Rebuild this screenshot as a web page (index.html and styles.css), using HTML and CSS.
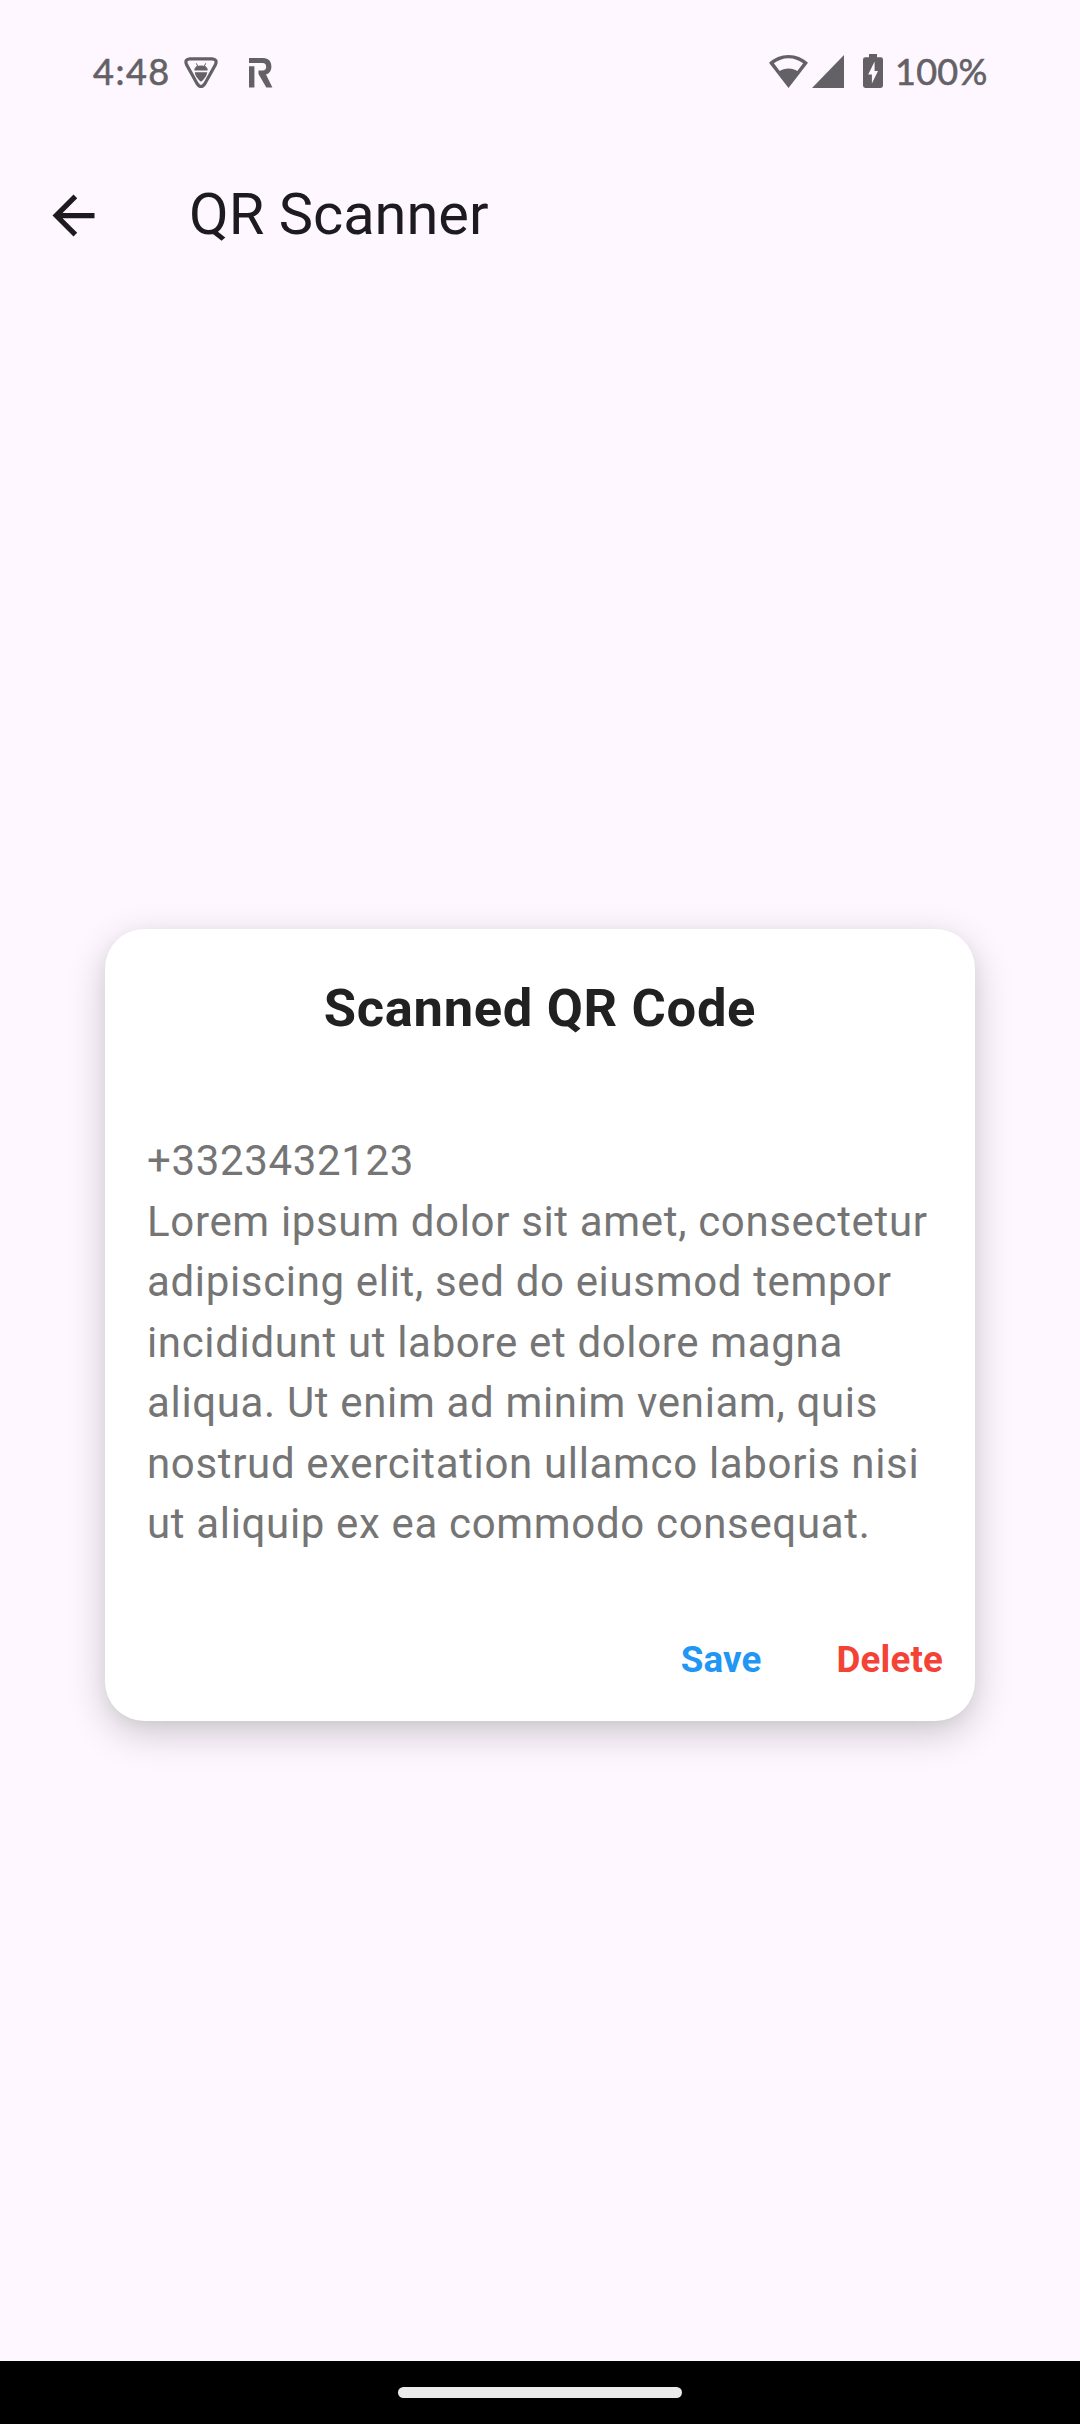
FILE: index.html
```html
<!DOCTYPE html>
<html lang="en">
<head>
<meta charset="utf-8">
<title>QR Scanner</title>
<link rel="stylesheet" href="styles.css">
</head>
<body>
<div class="screen">
  <header class="status-bar">
    <span class="clock">4:48</span>
    <svg class="icon-shield" viewBox="0 0 34 32" width="34" height="32">
      <path d="M6 1.9H28Q33.600 2.200 31.500 7.500L21 26.500Q17 32.500 13 26.500L2.500 7.500Q.4 2.200 6 1.900Z" fill="none" stroke="currentColor" stroke-width="3.200"/>
      <path d="M10.700 13.200C11 10.700 12.400 9.500 13.600 9L12.300 6.300M23.300 13.200C23 10.700 21.600 9.500 20.400 9L21.700 6.300" fill="none" stroke="currentColor" stroke-width="1"/>
      <path d="M10.700 13.500Q11 8.500 17 8.500T23.300 13.500ZM10.700 15.200H23.300Q22.500 20.500 17 24.700Q11.500 20.500 10.700 15.200Z" fill="currentColor"/>
    </svg>
    <svg class="icon-r" viewBox="0 0 24 30" width="24" height="30">
      <path d="M0 0H14C20 0 22.400 4 22.400 8.500C22.400 12.500 20.500 15.500 17 16.500L23.400 29.500H17.300L9.500 16V12.400H13.500C16 12.400 17.200 10.800 17.200 8.700S16 5 13.500 5H0ZM0 8.300H5.400V29.500H0Z" fill="currentColor"/>
    </svg>
    <span class="spacer"></span>
    <svg class="icon-wifi" viewBox="0 0 39 33" width="39" height="33">
      <path fill-rule="evenodd" d="M19.500 0C27 0 33.700 3 39 7.700L19.500 33L0 7.700C5.300 3 12 0 19.500 0ZM19.500 3.300C14 3.300 9 5.300 4.900 8.300L10.700 16C13 14.500 16 13.500 19.500 13.500S26 14.500 28.300 16L34.100 8.300C30 5.300 25 3.300 19.500 3.300Z" fill="currentColor"/>
    </svg>
    <svg class="icon-signal" viewBox="0 0 32 33" width="32" height="33"><path d="M32 0V33H0Z" fill="currentColor"/></svg>
    <svg class="icon-battery" viewBox="0 0 20 34" width="20" height="34">
      <path fill-rule="evenodd" d="M6 0H14V3.300H17.700Q20 3.300 20 5.600V31.600Q20 34 17.700 34H2.300Q0 34 0 31.600V5.600Q0 3.300 2.300 3.300H6ZM11.600 7.500L5.200 20.500H8.900V29.500L15 16.900H11.600Z" fill="currentColor"/>
    </svg>
    <span class="battery-level">100%</span>
  </header>
  <div class="app-bar">
    <svg class="back" viewBox="0 0 24 24" width="63" height="63"><path d="M20 11H7.830l5.590-5.590L12 4l-8 8 8 8 1.410-1.410L7.830 13H20v-2z" fill="currentColor"/></svg>
    <h1 class="app-title">QR Scanner</h1>
  </div>
  <main class="content">
    <section class="dialog">
      <h2 class="dialog-title">Scanned QR Code</h2>
      <p class="dialog-text">+3323432123<br>Lorem ipsum dolor sit amet, consectetur<br>adipiscing elit, sed do eiusmod tempor<br>incididunt ut labore et dolore magna<br>aliqua. Ut enim ad minim veniam, quis<br>nostrud exercitation ullamco laboris nisi<br>ut aliquip ex ea commodo consequat.</p>
      <div class="actions">
        <button class="action save">Save</button>
        <button class="action delete">Delete</button>
      </div>
    </section>
  </main>
  <footer class="nav-bar"><span class="pill"></span></footer>
</div>
</body>
</html>
```

FILE: styles.css
```css
* { box-sizing: border-box; margin: 0; padding: 0; }

body { background: #fef7ff; font-family: Roboto, sans-serif; }

.screen {
  width: 1080px;
  height: 2424px;
  display: flex;
  flex-direction: column;
  overflow: hidden;
}

svg { display: block; flex: none; }

.status-bar {
  height: 142px;
  padding: 0 93px 0 92px;
  display: flex;
  align-items: center;
  color: #646166;
  font-family: Lato, sans-serif;
  font-size: 36px;
  font-weight: 400;
  -webkit-text-stroke: 0.6px currentColor;
}

.status-bar svg { -webkit-text-stroke: 0; }

.clock { width: 92px; padding-left: 1px; letter-spacing: 1.5px; white-space: nowrap; }
.icon-shield { margin-top: 4px; }
.icon-r { margin: 4px 0 0 31px; }
.spacer { flex: 1; }
.icon-wifi { margin-right: 4px; }
.icon-signal { margin-right: 19px; }
.icon-battery { margin-right: 12px; }
.battery-level { width: 92px; letter-spacing: 0.3px; white-space: nowrap; }

.app-bar {
  height: 147px;
  padding-left: 42px;
  display: flex;
  align-items: center;
  gap: 84px;
  color: #1d1b20;
}

.app-title { padding-bottom: 3px; font-size: 57.75px; font-weight: 400; line-height: 74px; }

.content {
  flex: 1;
  padding: 640px 105px 0;
}

.dialog {
  height: 792px;
  padding: 42px;
  border-radius: 39.4px;
  background: #fff;
  box-shadow: 0 12px 38px rgba(0, 0, 0, 0.2), 0 4px 14px rgba(0, 0, 0, 0.04);
}

.dialog-title {
  font-size: 52.5px;
  font-weight: 700;
  line-height: 75px;
  letter-spacing: 0.66px;
  text-align: center;
  color: #212121;
}

.dialog-text {
  margin-top: 85px;
  font-size: 42px;
  line-height: 60.5px;
  letter-spacing: 0.66px;
  white-space: nowrap;
  color: #757575;
}

.actions {
  margin: 79px -10px 0 0;
  display: flex;
  justify-content: flex-end;
  gap: 75px;
}

.action {
  border: 0;
  background: none;
  font: 700 36.75px/52px Roboto, sans-serif;
  letter-spacing: 0.15px;
}

.save { color: #2196f3; }
.delete { color: #f44336; }

.nav-bar {
  height: 63px;
  background: #000;
  display: flex;
  align-items: center;
  justify-content: center;
}

.pill { width: 284px; height: 11px; border-radius: 6px; background: #ebebeb; }
```
